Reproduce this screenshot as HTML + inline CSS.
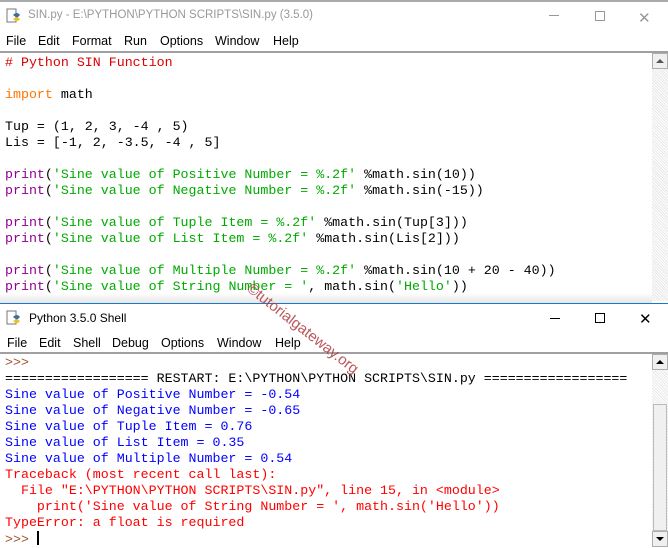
<!DOCTYPE html>
<html><head><meta charset="utf-8"><style>
*{margin:0;padding:0;box-sizing:border-box}
body{width:668px;height:547px;overflow:hidden;background:#fff;position:relative;font-family:"Liberation Sans",sans-serif}
.abs{position:absolute}
.title{font-size:11.5px;color:#999}
.menu span{position:absolute;font-size:12.5px;color:#000;white-space:pre}
.code{font-family:"Liberation Mono",monospace;font-size:13.3px;line-height:16px;white-space:pre;position:absolute;left:5px}
.k{color:#ff7700}.s{color:#00aa00}.b{color:#900090}.c{color:#dd0000}.o{color:#0000ff}.e{color:#ff0000}.p{color:#a0522d}
.sb{position:absolute;left:652px;width:16px;background:#f0f0f0;background-image:repeating-linear-gradient(45deg,#e8e8e8 0 1px,#fff 1px 2px)}
.btn{position:absolute;left:652px;width:16px;height:16px;background:#f0f0f0;border:1px solid #adadad}
</style></head><body>
<div class="abs" style="left:0;top:0;width:668px;height:2px;background:#aaa"></div>
<svg class="abs" style="left:6px;top:8px" width="16" height="16"><rect x="1" y="1" width="9" height="13" fill="#fff" stroke="#777"/><path d="M7 7 q4-4 7 0 l-3 3z" fill="#3a6ea5"/><path d="M7 11 q4 4 7 0 l-3-2z" fill="#f0c020"/></svg>
<div class="abs title" style="left:28px;top:9px">SIN.py - E:\PYTHON\PYTHON SCRIPTS\SIN.py (3.5.0)</div>
<div class="abs" style="left:549px;top:15px;width:10px;height:1px;background:#999"></div>
<div class="abs" style="left:595px;top:11px;width:10px;height:10px;border:1px solid #999"></div>
<div class="abs" style="left:638px;top:9px;color:#999;font-size:15px">✕</div>
<div class="abs menu" style="left:0;top:34px;width:668px"><span style="left:6px">File</span><span style="left:38px">Edit</span><span style="left:72px">Format</span><span style="left:124px">Run</span><span style="left:160px">Options</span><span style="left:215px">Window</span><span style="left:273px">Help</span></div>
<div class="abs" style="left:0;top:51px;width:668px;height:2px;background:#a0a0a0"></div>
<div class="sb" style="top:53px;height:248px"></div>
<div class="btn" style="top:53px"><div class="abs" style="left:3px;top:5px;border:4px solid transparent;border-bottom:4px solid #555;border-top:0"></div></div>
<div class="code" style="top:55px"><span class="c"># Python SIN Function</span>

<span class="k">import</span> math

Tup = (1, 2, 3, -4 , 5)
Lis = [-1, 2, -3.5, -4 , 5]

<span class="b">print</span>(<span class="s">'Sine value of Positive Number = %.2f'</span> %math.sin(10))
<span class="b">print</span>(<span class="s">'Sine value of Negative Number = %.2f'</span> %math.sin(-15))

<span class="b">print</span>(<span class="s">'Sine value of Tuple Item = %.2f'</span> %math.sin(Tup[3]))
<span class="b">print</span>(<span class="s">'Sine value of List Item = %.2f'</span> %math.sin(Lis[2]))

<span class="b">print</span>(<span class="s">'Sine value of Multiple Number = %.2f'</span> %math.sin(10 + 20 - 40))
<span class="b">print</span>(<span class="s">'Sine value of String Number = '</span>, math.sin(<span class="s">'Hello'</span>))</div>
<div class="abs" style="left:0;top:293px;width:652px;height:10px;background:linear-gradient(#fff,#e6e6e6)"></div>
<div class="abs" style="left:0;top:303px;width:668px;height:1px;background:#1979ca"></div>
<div class="abs" style="left:0;top:304px;width:668px;height:244px;background:#fff"></div>
<svg class="abs" style="left:6px;top:310px" width="16" height="16"><rect x="1" y="1" width="9" height="13" fill="#fff" stroke="#777"/><path d="M7 7 q4-4 7 0 l-3 3z" fill="#3a6ea5"/><path d="M7 11 q4 4 7 0 l-3-2z" fill="#f0c020"/></svg>
<div class="abs" style="left:29px;top:311px;font-size:12px;color:#000">Python 3.5.0 Shell</div>
<div class="abs" style="left:550px;top:318px;width:10px;height:1px;background:#000"></div>
<div class="abs" style="left:595px;top:313px;width:10px;height:10px;border:1px solid #000"></div>
<div class="abs" style="left:639px;top:310px;color:#000;font-size:15px">✕</div>
<div class="abs menu" style="left:0;top:336px;width:668px"><span style="left:7px">File</span><span style="left:39px">Edit</span><span style="left:73px">Shell</span><span style="left:112px">Debug</span><span style="left:161px">Options</span><span style="left:217px">Window</span><span style="left:275px">Help</span></div>
<div class="abs" style="left:0;top:352px;width:668px;height:2px;background:#a0a0a0"></div>
<div class="sb" style="top:354px;height:193px"></div>
<div class="abs" style="left:653px;top:404px;width:14px;height:127px;background:#f0f0f0;border:1px solid #bbb"></div>
<div class="btn" style="top:354px"><div class="abs" style="left:3px;top:5px;border:4px solid transparent;border-bottom:4px solid #000;border-top:0"></div></div>
<div class="btn" style="top:531px"><div class="abs" style="left:3px;top:5px;border:4px solid transparent;border-top:4px solid #000;border-bottom:0"></div></div>
<div class="code" style="top:355px"><span class="p">&gt;&gt;&gt;</span>
<span style="color:#000">================== RESTART: E:\PYTHON\PYTHON SCRIPTS\SIN.py ==================</span>
<span class="o">Sine value of Positive Number = -0.54</span>
<span class="o">Sine value of Negative Number = -0.65</span>
<span class="o">Sine value of Tuple Item = 0.76</span>
<span class="o">Sine value of List Item = 0.35</span>
<span class="o">Sine value of Multiple Number = 0.54</span>
<span class="e">Traceback (most recent call last):</span>
<span class="e">  File "E:\PYTHON\PYTHON SCRIPTS\SIN.py", line 15, in &lt;module&gt;</span>
<span class="e">    print('Sine value of String Number = ', math.sin('Hello'))</span>
<span class="e">TypeError: a float is required</span>
<span class="p">&gt;&gt;&gt;</span> <span style="display:inline-block;width:2px;height:14px;background:#000;vertical-align:-2px"></span></div>
<div class="abs" style="left:254px;top:280px;transform:rotate(38deg);transform-origin:0 0;font-size:15px;color:#b0383c;white-space:nowrap;opacity:.85">©tutorialgateway.org</div>
</body></html>
